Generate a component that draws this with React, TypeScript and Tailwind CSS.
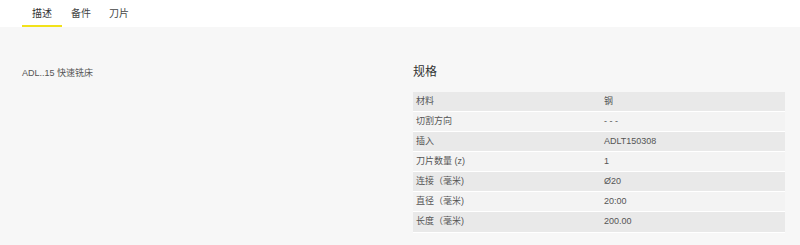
const specs: [string, string][] = [
  ['材料', '钢'],
  ['切割方向', '- - -'],
  ['插入', 'ADLT150308'],
  ['刀片数量 (z)', '1'],
  ['连接（毫米)', 'Ø20'],
  ['直径（毫米)', '20:00'],
  ['长度（毫米)', '200.00'],
];

const tabs = ['描述', '备件', '刀片'];

export default function App() {
  return (
    <div
      className="w-[800px] h-[245px] bg-[#f7f7f7] text-[#555]"
      style={{ fontFamily: '"Liberation Sans", Arial, "Noto Sans CJK SC", sans-serif' }}
    >
      {/* Tabs */}
      <div className="h-[27px] bg-white flex pl-[22px]">
        {tabs.map((t, i) => (
          <div
            key={t}
            className={`h-full flex items-center text-[10px] pt-[2px] ${
              i === 0 ? 'px-[10px] border-b-2 border-[#f2e21a] text-[#333]' : 'px-[9px] pb-[2px] text-[#444]'
            }`}
          >
            {t}
          </div>
        ))}
      </div>

      {/* Body */}
      <div className="flex pl-[22px] pr-[15px] pt-[38px]">
        <div className="flex-1 text-[9px] leading-[14px] pt-[1px]">ADL..15 快速铣床</div>
        <div className="w-[372px]">
          <h2 className="text-[12px] leading-[14px] text-[#333] mb-[13px]">规格</h2>
          <div className="text-[9px]">
            {specs.map(([k, v], i) => (
              <div
                key={k}
                className={`grid grid-cols-2 h-[20px] last:h-[21px] items-center border-b border-white ${
                  i % 2 === 0 ? 'bg-[#e9e9e9]' : 'bg-[#f3f3f3]'
                }`}
              >
                <span className="pl-[3px]">{k}</span>
                <span className="pl-[5px]">{v}</span>
              </div>
            ))}
          </div>
        </div>
      </div>
    </div>
  );
}
